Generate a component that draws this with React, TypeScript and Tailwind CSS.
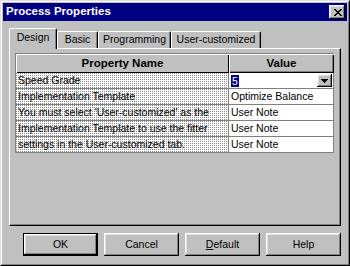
import type { ReactNode } from 'react'

const raised =
  'shadow-[inset_-1px_-1px_0_#000,inset_1px_1px_0_#fff,inset_-2px_-2px_0_#808080,inset_2px_2px_0_#dfdfdf]'

const dither =
  'bg-[conic-gradient(at_1px_1px,#ffffff_0_75%,#8a8a8a_0)] bg-[length:2px_2px]'

const rows = [
  { name: 'Speed Grade', value: '5', combo: true },
  { name: 'Implementation Template', value: 'Optimize Balance' },
  { name: "You must select 'User-customized' as the", value: 'User Note' },
  { name: 'Implementation Template to use the fitter', value: 'User Note' },
  { name: 'settings in the User-customized tab.', value: 'User Note' },
]

const tabs = [
  { label: 'Design', width: 'w-[48px]' },
  { label: 'Basic', width: 'w-[41px]' },
  { label: 'Programming', width: 'w-[73px]' },
  { label: 'User-customized', width: 'w-[90px]' },
]

function Button({ children, isDefault }: { children: ReactNode; isDefault?: boolean }) {
  return (
    <div
      className={`w-[75px] h-[23px] flex items-center justify-center bg-[#c0c0c0] text-black ${raised} ${
        isDefault ? 'border border-black' : ''
      }`}
    >
      {children}
    </div>
  )
}

export default function App() {
  return (
    <div
      className="w-[350px] h-[266px] box-border bg-[#c0c0c0] border border-t-[#dfdfdf] border-l-[#dfdfdf] border-r-black border-b-black text-[10.5px] text-black"
      style={{ fontFamily: '"Liberation Sans", Arial, sans-serif' }}
    >
      <div className="h-full box-border border border-t-white border-l-white border-r-[#808080] border-b-[#808080] p-px">
        {/* title bar */}
        <div className="h-[18px] bg-[#000080] flex items-center justify-between pl-[3px] pr-[2px]">
          <span className="text-white font-bold text-[11.5px] leading-none">Process Properties</span>
          <div className={`w-[16px] h-[14px] bg-[#c0c0c0] flex items-center justify-center ${raised}`}>
            <svg width="8" height="7" viewBox="0 0 8 7" shapeRendering="crispEdges" className="ml-px">
              <path
                fill="#000"
                d="M0 0h2v1H0z M6 0h2v1H6z M1 1h2v1H1z M5 1h2v1H5z M2 2h4v1H2z M3 3h2v1H3z M2 4h4v1H2z M1 5h2v1H1z M5 5h2v1H5z M0 6h2v1H0z M6 6h2v1H6z"
              />
            </svg>
          </div>
        </div>

        <div className="px-[6px]">
          {/* tabs */}
          <div className="mt-[7px] h-[20px] flex items-end relative z-10">
            {tabs.map((t, i) => {
              const active = i === 0
              return (
                <div
                  key={t.label}
                  className={`${t.width} box-border flex items-center justify-center bg-[#c0c0c0] rounded-t-[2px] border-t border-l border-r border-t-white border-l-white border-r-black shadow-[inset_-1px_0_0_#808080] ${
                    active ? 'h-[21px] -mb-px pb-[2px]' : 'h-[17px]'
                  }`}
                >
                  {t.label}
                </div>
              )
            })}
          </div>

          {/* panel */}
          <div className="h-[178px] box-border border border-t-white border-l-white border-r-black border-b-black shadow-[inset_-1px_-1px_0_#808080] pt-[4px] pl-[5px]">
            <div className="w-[319px] border-t border-l border-[#808080]">
              <div className="flex h-[19px] font-bold text-[11.5px]">
                <div className="w-[213px] flex items-center justify-center shadow-[inset_1px_1px_0_#fff,inset_-1px_-1px_0_#000]">
                  Property Name
                </div>
                <div className="flex-1 flex items-center justify-center shadow-[inset_1px_1px_0_#fff,inset_-1px_-1px_0_#000,inset_-2px_-2px_0_#808080]">
                  Value
                </div>
              </div>
              {rows.map((r) => (
                <div key={r.name} className="flex h-[16px] border-b border-[#808080]">
                  <div className={`w-[213px] box-border border-r border-[#808080] pl-[2px] flex items-center whitespace-nowrap overflow-hidden ${dither}`}>
                    <span>{r.name}</span>
                  </div>
                  <div className="flex-1 box-border border-r border-[#808080] bg-white pl-[2px] flex items-center">
                    {r.combo ? (
                      <div className="flex-1 flex items-center justify-between pr-px">
                        <span className="bg-[#000080] text-white px-px leading-[12px]">{r.value}</span>
                        <div className={`w-[15px] h-[13px] bg-[#c0c0c0] flex items-center justify-center ${raised}`}>
                          <svg width="7" height="4" viewBox="0 0 7 4" shapeRendering="crispEdges">
                            <path fill="#000" d="M0 0h7v1H0z M1 1h5v1H1z M2 2h3v1H2z M3 3h1v1H3z" />
                          </svg>
                        </div>
                      </div>
                    ) : (
                      r.value
                    )}
                  </div>
                </div>
              ))}
            </div>
          </div>

          {/* buttons */}
          <div className="mt-[7px] flex justify-end gap-[6px]">
            <Button isDefault>OK</Button>
            <Button>Cancel</Button>
            <Button>
              <span>
                <span className="underline">D</span>efault
              </span>
            </Button>
            <Button>Help</Button>
          </div>
        </div>
      </div>
    </div>
  )
}
